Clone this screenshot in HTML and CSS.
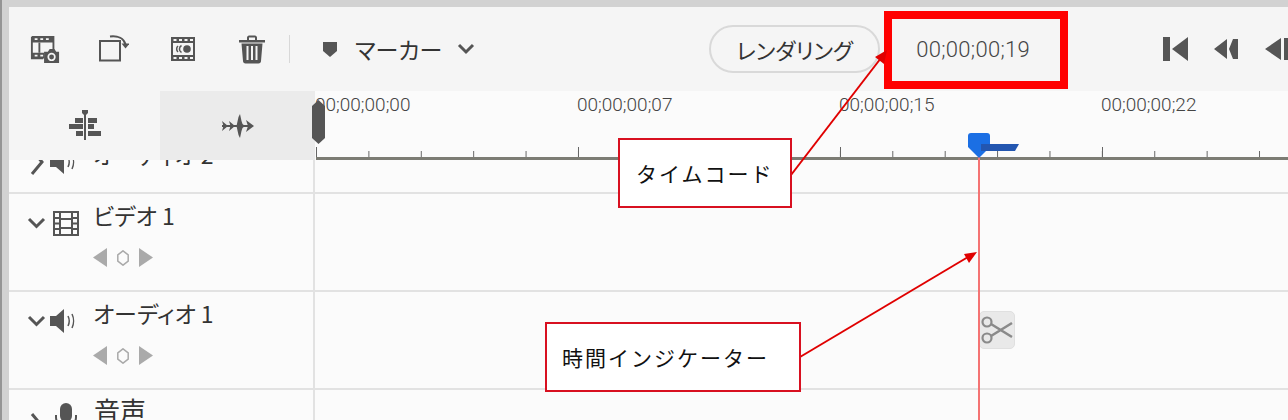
FILE: index.html
```html
<!DOCTYPE html>
<html lang="ja">
  <head>
    <meta charset="UTF-8" />
    <title>タイムライン</title>
    <link rel="stylesheet" href="styles.css">
  </head>
  <body>
    <div class="app">
      <header class="toolbar">
        <div class="tools">
          <button class="tool">
            <svg width="32" height="30" viewBox="0 0 32 30">
              <path d="M2 2h23v6H2zM2 19h13v6H2z" fill="#555"/>
              <path d="M5 3.500h3v2H5zM11 3.500h3v2h-3zM17 3.500h3v2h-3zM5 21h3v2H5zM11 21h3v2h-3z" fill="#f5f5f5"/>
              <path d="M2 2h23v14M2 2v23h12M10 8v11" fill="none" stroke="#555" stroke-width="2"/>
              <path d="M15 18h4l2-3h5l2 3h3v12H15z" fill="#555"/>
              <circle cx="23" cy="23.500" r="3.500" fill="none" stroke="#f5f5f5" stroke-width="1.800"/>
            </svg>
          </button>
          <button class="tool">
            <svg width="30" height="28" viewBox="0 0 30 28">
              <rect x="1" y="6" width="20" height="19.500" fill="none" stroke="#555" stroke-width="2"/>
              <path d="M11 1.500c8 -1 14 2 15.500 8" fill="none" stroke="#555" stroke-width="2"/>
              <path d="M22.500 8.500h8l-4 5z" fill="#555"/>
            </svg>
          </button>
          <button class="tool">
            <svg width="26" height="26" viewBox="0 0 26 26">
              <rect x="1" y="1" width="24" height="24" fill="#555"/>
              <rect x="3" y="7" width="20" height="12" fill="#f5f5f5"/>
              <path d="M3.500 3h3v2h-3zM9 3h3v2H9zM14.500 3h3v2h-3zM20 3h3v2h-3zM3.500 21h3v2h-3zM9 21h3v2H9zM14.500 21h3v2h-3zM20 21h3v2h-3z" fill="#f5f5f5"/>
              <circle cx="17" cy="13" r="3.800" fill="#555"/>
              <path d="M11.500 9.500a4 4 0 0 0 0 7M8 10a4 4 0 0 0 0 6" fill="none" stroke="#555" stroke-width="1.500"/>
            </svg>
          </button>
          <button class="tool">
            <svg width="28" height="30" viewBox="0 0 28 30">
              <path d="M1 6h26v2.500H1zM9 6V3.500c0-1 1-2 2-2h6c1 0 2 1 2 2V6h-2V3.500h-6V6z" fill="#555"/>
              <path d="M3.500 9.500h21L23 27c0 1.500-1 2.500-2.500 2.500h-13C6 29.500 5 28.500 5 27z" fill="#555"/>
              <path d="M9.500 12v14M14 12v14M18.500 12v14" stroke="#f5f5f5" stroke-width="2"/>
            </svg>
          </button>
        </div>
        <span class="divider"></span>
        <div class="marker">
          <svg width="14" height="16" viewBox="0 0 14 16">
            <path d="M0 1h14v9l-7 6-7-6z" fill="#555"/>
          </svg>
          <span class="marker-label">マーカー</span>
          <svg class="chevron" width="18" height="12" viewBox="0 0 18 12">
            <path d="M2 2l7 7 7-7" fill="none" stroke="#555" stroke-width="3"/>
          </svg>
        </div>
        <button class="render-btn">レンダリング</button>
        <span class="timecode">00;00;00;19</span>
        <div class="transport">
          <svg width="25" height="24" viewBox="0 0 25 24"><path d="M0 0h7v24H0zM25 0v24L9 12z" fill="#555"/></svg>
          <svg width="25" height="20" viewBox="0 0 25 20"><path d="M13 0v20L0 10zM19 0h5v20h-5l-4-10z" fill="#555"/></svg>
          <svg width="25" height="24" viewBox="0 0 25 24"><path d="M16 1v22L0 12zM19 1h6v22h-6z" fill="#555"/></svg>
        </div>
      </header>

      <section class="timeline-head">
        <div class="tabs">
          <div class="tab">
            <svg width="32" height="30" viewBox="0 0 32 30">
              <path d="M13 0h6v3l-2 2v25h-2V5l-2-2z" fill="#555"/>
              <path d="M6 8h8v5H6zM19 8h9v5h-9zM0 14h14v5H0zM19 14h6v5h-6zM7 21h7v5H7zM19 21h13v5H19z" fill="#555"/>
            </svg>
          </div>
          <div class="tab active">
            <svg width="32" height="24" viewBox="0 0 32 24">
              <path d="M0 7l6 5-6 5 1.500-5zM7 7l6 5-6 5 1.500-5zM14.500 12l2-9 1.500-3 1.500 7 1 3 2.500 2-2.500 2-1 3-1.500 7-1.500-3zM24 6l8 6-8 6 2-6z" fill="#555"/>
              <path d="M0 11h30v2H0z" fill="#555"/>
            </svg>
          </div>
        </div>
        <div class="ruler">
          <div class="ruler-labels">
            <span class="ruler-label">00;00;00;00</span>
            <span class="ruler-label">00;00;00;07</span>
            <span class="ruler-label">00;00;00;15</span>
            <span class="ruler-label">00;00;00;22</span>
          </div>
          <div class="ticks"></div>
          <svg class="work-handle" width="13" height="44" viewBox="0 0 13 44">
            <path d="M6.500 0L13 6v32l-6.500 6L0 38V6z" fill="#555"/>
          </svg>
        </div>
      </section>

      <section class="tracks">
        <div class="track collapsed">
          <div class="track-head">
            <svg class="track-chevron closed" width="14" height="28" viewBox="0 0 14 28"><path d="M2 2l10 12L2 26" fill="none" stroke="#555" stroke-width="3"/></svg>
            <svg class="track-icon speaker" width="28" height="24" viewBox="0 0 28 24"><path d="M0 7h6l8-7v24l-8-7H0z" fill="#555"/><path d="M18 7c1.500 3 1.500 7 0 10M22 5c2 4 2 10 0 14" fill="none" stroke="#555" stroke-width="1.500"/></svg>
            <div class="track-info">
              <div class="track-name">オーディオ 2</div>
            </div>
          </div>
          <div class="track-body"></div>
        </div>

        <div class="track">
          <div class="track-head">
            <svg class="track-chevron" width="19" height="12" viewBox="0 0 19 12"><path d="M2 2l7.500 7.500L17 2" fill="none" stroke="#555" stroke-width="3"/></svg>
            <svg class="track-icon" width="26" height="25" viewBox="0 0 26 25">
              <path d="M1 1h24v23H1z" fill="none" stroke="#555" stroke-width="2"/>
              <path d="M7 1v23M19 1v23M7 8h12M7 17h12" fill="none" stroke="#555" stroke-width="2"/>
              <path d="M1 7h6M1 12.500h6M1 18h6M19 7h6M19 12.500h6M19 18h6" stroke="#555" stroke-width="2"/>
            </svg>
            <div class="track-info">
              <div class="track-name">ビデオ 1</div>
              <div class="keys">
                <svg width="14" height="19" viewBox="0 0 14 19"><path d="M14 0v19L0 9.500z" fill="#aaa"/></svg>
                <svg width="12" height="16" viewBox="0 0 12 16"><path d="M6 .8l5.200 4v6.400L6 15.200.8 11.200V4.800z" fill="none" stroke="#aaa" stroke-width="1.500"/></svg>
                <svg width="14" height="19" viewBox="0 0 14 19"><path d="M0 0v19l14-9.500z" fill="#aaa"/></svg>
              </div>
            </div>
          </div>
          <div class="track-body"></div>
        </div>

        <div class="track">
          <div class="track-head">
            <svg class="track-chevron" width="19" height="12" viewBox="0 0 19 12"><path d="M2 2l7.500 7.500L17 2" fill="none" stroke="#555" stroke-width="3"/></svg>
            <svg class="track-icon speaker" width="28" height="24" viewBox="0 0 28 24"><path d="M0 7h6l8-7v24l-8-7H0z" fill="#555"/><path d="M18 7c1.500 3 1.500 7 0 10M22 5c2 4 2 10 0 14" fill="none" stroke="#555" stroke-width="1.500"/></svg>
            <div class="track-info">
              <div class="track-name">オーディオ 1</div>
              <div class="keys">
                <svg width="14" height="19" viewBox="0 0 14 19"><path d="M14 0v19L0 9.500z" fill="#aaa"/></svg>
                <svg width="12" height="16" viewBox="0 0 12 16"><path d="M6 .8l5.200 4v6.400L6 15.200.8 11.200V4.800z" fill="none" stroke="#aaa" stroke-width="1.500"/></svg>
                <svg width="14" height="19" viewBox="0 0 14 19"><path d="M0 0v19l14-9.500z" fill="#aaa"/></svg>
              </div>
            </div>
          </div>
          <div class="track-body">
            <div class="cut-clip">
              <svg width="34" height="30" viewBox="0 0 34 30">
                <circle cx="7" cy="7" r="4.500" fill="none" stroke="#8a8a8a" stroke-width="2.200"/>
                <circle cx="7" cy="23" r="4.500" fill="none" stroke="#8a8a8a" stroke-width="2.200"/>
                <path d="M11 9l21 13M11 21L32 8" stroke="#8a8a8a" stroke-width="2.600"/>
              </svg>
            </div>
          </div>
        </div>

        <div class="track voice">
          <div class="track-head">
            <svg class="track-chevron closed" width="14" height="28" viewBox="0 0 14 28"><path d="M2 2l10 12L2 26" fill="none" stroke="#555" stroke-width="3"/></svg>
            <svg class="track-icon" width="24" height="26" viewBox="0 0 24 26">
              <rect x="6" y="0" width="12" height="19" rx="6" fill="#555"/>
              <path d="M2 12v2c0 6 4 10 10 10s10-4 10-10v-2" fill="none" stroke="#555" stroke-width="2"/>
            </svg>
            <div class="track-info">
              <div class="track-name">音声</div>
            </div>
          </div>
          <div class="track-body"></div>
        </div>
      </section>

      <!-- 再生ヘッド -->
      <div class="playhead-line"></div>
      <svg class="playhead" width="52" height="26" viewBox="0 0 52 26">
        <path d="M3 0h16c2 0 3 1 3 3v11l-11 11L0 14V3c0-2 1-3 3-3z" fill="#1b6fe4"/>
        <path d="M13 11h38l-4 7H13z" fill="#2356b0"/>
      </svg>

      <!-- 注釈 -->
      <div class="callout-frame"></div>
      <svg class="callout-arrows" width="1288" height="420" viewBox="0 0 1288 420">
        <path d="M791 175L881 58" stroke="#e00000" stroke-width="2" fill="none"/>
        <path d="M887 50l-3 14-9-7z" fill="#e00000"/>
        <path d="M800 357L968 257" stroke="#e00000" stroke-width="2" fill="none"/>
        <path d="M977 252l-8 11-5-9z" fill="#e00000"/>
      </svg>
      <div class="note note-timecode">タイムコード</div>
      <div class="note note-indicator">時間インジケーター</div>
    </div>
  </body>
</html>
```

FILE: styles.css
```css
html,
body {
  margin: 0;
  height: 100%;
}
body {
  box-sizing: border-box;
  border-left: 2px solid #959595;
  background: #d2d2d2;
  color: #333;
  font-family: "Noto Sans CJK JP", "Liberation Sans", sans-serif;
  overflow: hidden;
}
button {
  font-family: inherit;
  padding: 0;
  background: none;
  border: none;
}
.app {
  position: relative;
  width: 1286px;
  height: 420px;
  box-sizing: border-box;
  border-top: 7px solid #d2d2d2;
  border-left: 7px solid #d2d2d2;
  background: #fbfbfb;
  overflow: hidden;
}

/* ツールバー */
.toolbar {
  display: flex;
  align-items: center;
  height: 84px;
  background: #f5f5f5;
}
.toolbar > * {
  flex-shrink: 0;
}
.tools {
  display: flex;
  gap: 39px;
  padding-left: 21px;
}
.tool {
  display: flex;
  justify-content: center;
  align-items: center;
  width: 30px;
  height: 32px;
}
.divider {
  width: 1px;
  height: 28px;
  margin-left: 22px;
  background: #d8d8d8;
}
.marker {
  display: flex;
  align-items: center;
  margin-left: 33px;
}
.marker-label {
  margin-left: 18px;
  font-size: 23px;
  font-feature-settings: "palt";
  line-height: 32px;
  white-space: nowrap;
}
.chevron {
  margin-left: 15px;
}
.render-btn {
  width: 171px;
  height: 48px;
  box-sizing: border-box;
  margin-left: 234px;
  border: 2px solid #d9d9d9;
  border-radius: 24px;
  color: #333;
  font-size: 22px;
  font-feature-settings: "palt";
}
.timecode {
  width: 113px;
  margin-left: 36px;
  color: #444;
  font-family: Roboto, "Liberation Sans", sans-serif;
  font-size: 22px;
  font-weight: 300;
  letter-spacing: 0.3px;
  white-space: nowrap;
}
.transport {
  display: flex;
  align-items: center;
  gap: 26px;
  margin-left: 134px;
}

/* ルーラー */
.timeline-head {
  position: relative;
  z-index: 1;
  display: flex;
  height: 69px;
}
.tabs {
  display: flex;
  width: 306px;
  background: #f5f5f5;
}
.tab {
  display: flex;
  justify-content: center;
  align-items: center;
  width: 151px;
  height: 67px;
}
.tab.active {
  width: 155px;
  height: 69px;
  background: #ebebeb;
}
.ruler {
  position: relative;
  flex: 1;
  display: flex;
  flex-direction: column;
  background: #fbfbfb;
}
.ruler-labels {
  display: flex;
  flex: 1;
  padding-top: 1px;
}
.ruler-label {
  width: 262px;
  color: #444;
  font-family: Roboto, "Liberation Sans", sans-serif;
  font-size: 19px;
  font-weight: 300;
  line-height: 26px;
}
.ticks {
  height: 10px;
  margin-left: 1px;
  border-bottom: 3px solid #7c7c74;
  background:
    linear-gradient(90deg, #666 1px, transparent 1px) left bottom / 262px 10px repeat-x,
    linear-gradient(90deg, #666 1px, transparent 1px) left bottom / 52.4px 6px repeat-x;
}
.work-handle {
  position: absolute;
  left: -3px;
  top: 9px;
}

/* トラック */
.tracks {
  margin-top: -23px;
}
.track {
  display: flex;
  height: 98px;
  box-sizing: border-box;
  border-bottom: 2px solid #e2e2e2;
}
.track.collapsed {
  height: 57px;
}
.track-head {
  display: grid;
  grid-template-columns: 18px 26px 1fr;
  grid-template-rows: 48px;
  align-items: start;
  width: 306px;
  box-sizing: border-box;
  padding-left: 18px;
  border-right: 2px solid #e2e2e2;
}
.track-chevron {
  margin-top: 23px;
}
.track-chevron.closed {
  margin-top: 22px;
  margin-left: 3px;
}
.track-icon {
  margin-top: 17px;
  margin-left: 8px;
}
.track-icon.speaker {
  margin-left: 5px;
}
.track-info {
  margin-left: 22px;
  padding-top: 5px;
}
.track-name {
  color: #333;
  font-size: 23px;
  font-feature-settings: "palt";
  line-height: 32px;
  white-space: nowrap;
}
.collapsed .track-chevron.closed {
  margin-top: 11px;
}
.collapsed .track-icon {
  margin-top: 13px;
}
.collapsed .track-info {
  padding-top: 1px;
}
.voice .track-icon {
  margin-top: 13px;
  margin-left: 9px;
}
.voice .track-info {
  padding-top: 4px;
  margin-left: 23px;
}
.voice .track-name {
  font-size: 26px;
}
.keys {
  display: flex;
  align-items: center;
  gap: 10px;
  margin-top: 17px;
}
.track-body {
  position: relative;
  flex: 1;
}
.cut-clip {
  position: absolute;
  left: 664px;
  top: 19px;
  display: flex;
  align-items: center;
  justify-content: center;
  width: 36px;
  height: 38px;
  box-sizing: border-box;
  border: 1px solid #e0e0e0;
  border-radius: 5px;
  background: #e9e9e9;
}

/* 再生ヘッド */
.playhead-line {
  position: absolute;
  z-index: 2;
  left: 969px;
  top: 150px;
  bottom: 0;
  width: 2px;
  background: #f47373;
}
.playhead {
  position: absolute;
  z-index: 2;
  left: 959px;
  top: 126px;
}

/* 注釈 */
.callout-frame {
  position: absolute;
  z-index: 3;
  left: 875px;
  top: 4px;
  width: 184px;
  height: 78px;
  box-sizing: border-box;
  border: 8px solid #ff0000;
}
.callout-arrows {
  position: absolute;
  z-index: 3;
  left: -9px;
  top: -7px;
}
.note {
  position: absolute;
  z-index: 3;
  display: flex;
  align-items: center;
  height: 70px;
  box-sizing: border-box;
  border: 2px solid #d81020;
  background: #fff;
  color: #111;
  font-size: 21px;
  letter-spacing: 2px;
}
.note-timecode {
  left: 609px;
  top: 131px;
  width: 174px;
  padding-left: 16px;
}
.note-indicator {
  left: 536px;
  top: 315px;
  width: 256px;
  padding-left: 15px;
}
```
